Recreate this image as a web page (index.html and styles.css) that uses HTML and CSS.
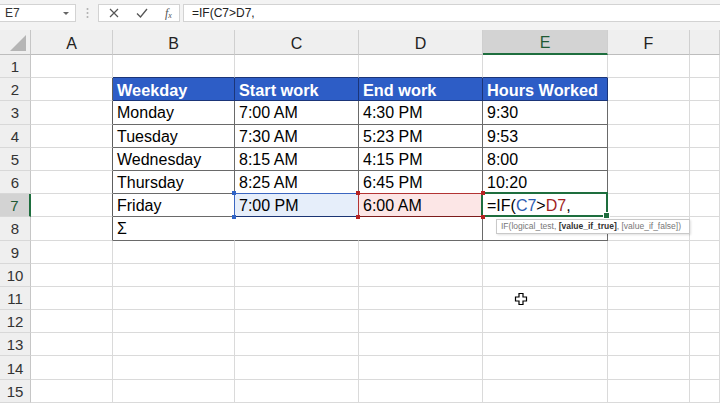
FILE: index.html
```html
<!DOCTYPE html>
<html>
<head>
<meta charset="utf-8">
<link rel="stylesheet" href="styles.css">
</head>
<body>
<div class="app">
  <div class="fbar">
    <div class="namebox"><span>E7</span><span class="dd"></span></div>
    <div class="sep"><svg width="3" height="12" viewBox="0 0 3 12"><circle cx="1.5" cy="2" r="1" fill="#b0b0b0"/><circle cx="1.5" cy="6" r="1" fill="#b0b0b0"/><circle cx="1.5" cy="10" r="1" fill="#b0b0b0"/></svg></div>
    <div class="btns">
      <svg width="10" height="10" viewBox="0 0 10 10"><path d="M1 1L9 9M9 1L1 9" stroke="#555" stroke-width="1.2" fill="none"/></svg>
      <svg width="12" height="10" viewBox="0 0 12 10"><path d="M1 5.5L4.5 9L11 1" stroke="#555" stroke-width="1.3" fill="none"/></svg>
      <span class="fx">f<sub>x</sub></span>
    </div>
    <div class="formula">=IF(C7&gt;D7,</div>
  </div>

  <div class="sheet">
    <!-- column headers -->
    <div class="corner"><span class="tri"></span></div>
    <div class="ch">A</div><div class="ch">B</div><div class="ch">C</div><div class="ch">D</div><div class="ch ch-sel">E</div><div class="ch">F</div><div class="ch"></div>

    <!-- row 1 -->
    <div class="rh">1</div><div class="c"></div><div class="c tb"></div><div class="c tb"></div><div class="c tb"></div><div class="c tb"></div><div class="c"></div><div class="c"></div>

    <!-- row 2 -->
    <div class="rh">2</div><div class="c lb"></div><div class="c th">Weekday</div><div class="c th">Start work</div><div class="c th">End work</div><div class="c th">Hours Worked</div><div class="c"></div><div class="c"></div>

    <!-- row 3 -->
    <div class="rh">3</div><div class="c lb"></div><div class="c td">Monday</div><div class="c td">7:00 AM</div><div class="c td">4:30 PM</div><div class="c td">9:30</div><div class="c"></div><div class="c"></div>

    <!-- row 4 -->
    <div class="rh">4</div><div class="c lb"></div><div class="c td">Tuesday</div><div class="c td">7:30 AM</div><div class="c td">5:23 PM</div><div class="c td">9:53</div><div class="c"></div><div class="c"></div>

    <!-- row 5 -->
    <div class="rh">5</div><div class="c lb"></div><div class="c td">Wednesday</div><div class="c td">8:15 AM</div><div class="c td">4:15 PM</div><div class="c td">8:00</div><div class="c"></div><div class="c"></div>

    <!-- row 6 -->
    <div class="rh">6</div><div class="c lb"></div><div class="c td">Thursday</div><div class="c td">8:25 AM</div><div class="c td">6:45 PM</div><div class="c td">10:20</div><div class="c"></div><div class="c"></div>

    <!-- row 7 -->
    <div class="rh rh-sel">7</div><div class="c lb"></div><div class="c td">Friday</div>
    <div class="c td ref-c">7:00 PM<span class="h h-tl"></span><span class="h h-bl"></span></div>
    <div class="c td ref-d">6:00 AM<span class="h h-tl"></span><span class="h h-bl"></span><span class="h h-tr"></span><span class="h h-br"></span></div>
    <div class="c td active">=IF(<span class="blue">C7</span>&gt;<span class="red">D7</span>,<span class="fill"></span></div>
    <div class="c"></div><div class="c"></div>

    <!-- row 8 -->
    <div class="rh">8</div><div class="c lb"></div><div class="c td nr">Σ</div><div class="c td nr"></div><div class="c td"></div><div class="c td"></div><div class="c"></div><div class="c"></div>

    <div class="rh">9</div><div class="c"></div><div class="c"></div><div class="c"></div><div class="c"></div><div class="c"></div><div class="c"></div><div class="c"></div>
    <div class="rh">10</div><div class="c"></div><div class="c"></div><div class="c"></div><div class="c"></div><div class="c"></div><div class="c"></div><div class="c"></div>
    <div class="rh">11</div><div class="c"></div><div class="c"></div><div class="c"></div><div class="c"></div><div class="c"></div><div class="c"></div><div class="c"></div>
    <div class="rh">12</div><div class="c"></div><div class="c"></div><div class="c"></div><div class="c"></div><div class="c"></div><div class="c"></div><div class="c"></div>
    <div class="rh">13</div><div class="c"></div><div class="c"></div><div class="c"></div><div class="c"></div><div class="c"></div><div class="c"></div><div class="c"></div>
    <div class="rh">14</div><div class="c"></div><div class="c"></div><div class="c"></div><div class="c"></div><div class="c"></div><div class="c"></div><div class="c"></div>
    <div class="rh">15</div><div class="c"></div><div class="c"></div><div class="c"></div><div class="c"></div><div class="c"></div><div class="c"></div><div class="c"></div>
  </div>

  <div class="tooltip">IF(logical_test, <b>[value_if_true]</b>, [value_if_false])</div>

  <svg class="cursor" width="14" height="14" viewBox="0 0 14 14"><path d="M5 1.5H9V5H12.5V9H9V12.5H5V9H1.5V5H5Z" fill="#fff" stroke="#000" stroke-width="1.2"/></svg>
</div>
</body>
</html>
```

FILE: styles.css
```css
html, body {
  margin: 0;
  padding: 0;
  background: #ffffff;
}

.app {
  position: relative;
  width: 720px;
  height: 404px;
  overflow: hidden;
  font-family: "Liberation Sans", Arial, sans-serif;
  color: #000;
}

/* formula bar */
.fbar {
  display: flex;
  align-items: flex-start;
  height: 30px;
  padding-top: 4px;
  box-sizing: border-box;
  background: #f3f3f3;
}

.namebox {
  width: 76px;
  height: 18px;
  box-sizing: border-box;
  background: #fff;
  border: 1px solid #d3d3d3;
  border-left: none;
  display: flex;
  align-items: center;
  justify-content: space-between;
  padding: 0 6px 0 5px;
  font-size: 12px;
  color: #333;
}

.dd {
  width: 0;
  height: 0;
  border-left: 3px solid transparent;
  border-right: 3px solid transparent;
  border-top: 3px solid #666;
}

.sep {
  width: 22px;
  height: 18px;
  display: flex;
  align-items: center;
  justify-content: center;
}

.btns {
  width: 82px;
  height: 18px;
  box-sizing: border-box;
  background: #fff;
  border: 1px solid #d3d3d3;
  display: flex;
  align-items: center;
  gap: 17px;
  padding-left: 10px;
}

.fx {
  font-family: "Liberation Serif", "Times New Roman", serif;
  font-style: italic;
  font-size: 12px;
  color: #555;
  line-height: 1;
}

.fx sub {
  font-size: 8px;
  vertical-align: -1px;
}

.formula {
  flex: 1;
  height: 18px;
  margin-left: 3px;
  box-sizing: border-box;
  background: #fff;
  border: 1px solid #d3d3d3;
  border-right: none;
  padding-left: 8px;
  font-size: 12px;
  line-height: 16px;
  color: #222;
}

/* sheet */
.sheet {
  display: grid;
  grid-template-columns: 31px 82px 122px 124px 124px 125px 82px 30px;
  grid-template-rows: 25px repeat(15, 23.2px);
}

.corner {
  position: relative;
  background: #efefef;
  border-right: 1px solid #c6c6c6;
  border-bottom: 1px solid #bdbdbd;
  box-sizing: border-box;
}

.tri {
  position: absolute;
  right: 4px;
  bottom: 3px;
  width: 0;
  height: 0;
  border-left: 16px solid transparent;
  border-bottom: 16px solid #b5b5b5;
}

.ch {
  background: #efefef;
  border-right: 1px solid #cfcfcf;
  border-bottom: 1px solid #bdbdbd;
  box-sizing: border-box;
  display: flex;
  align-items: center;
  justify-content: center;
  padding-top: 3px;
  font-size: 16px;
  color: #222;
}

.ch-sel {
  background: #d3d3d3;
  border-bottom: 2px solid #1e6e3e;
  color: #1f5a34;
}

.rh {
  background: #efefef;
  border-right: 1px solid #c6c6c6;
  border-bottom: 1px solid #d8d8d8;
  box-sizing: border-box;
  display: flex;
  align-items: center;
  justify-content: center;
  padding-top: 1px;
  font-size: 15px;
  color: #333;
}

.rh-sel {
  background: #d3d3d3;
  border-right: 2px solid #1e6e3e;
  color: #1f5a34;
}

.c {
  position: relative;
  border-right: 1px solid #dadada;
  border-bottom: 1px solid #dadada;
  box-sizing: border-box;
  display: flex;
  align-items: center;
  padding-left: 4px;
  padding-top: 2px;
  font-size: 16px;
  white-space: nowrap;
}

.tb {
  border-bottom-color: #1b3578;
}

.lb {
  border-right-color: #5e5e5e;
}

.th {
  background: #2d5dc6;
  color: #fff;
  font-weight: bold;
  font-size: 16.3px;
  border-right-color: #1b3578;
  border-bottom-color: #1b3578;
}

.td {
  border-right-color: #6a6a6a;
  border-bottom-color: #6a6a6a;
}

.nr {
  border-right-color: transparent;
}

/* reference highlights */
.ref-c {
  background: #e6eefa;
}

.ref-c::after {
  content: "";
  position: absolute;
  left: -1px;
  top: -1px;
  right: -1px;
  bottom: -1px;
  border: 1px solid #3b66c0;
  border-bottom-color: #1b3473;
}

.ref-d {
  background: #fce6e6;
}

.ref-d::after {
  content: "";
  position: absolute;
  left: -1px;
  top: -1px;
  right: -1px;
  bottom: -1px;
  border: 1px solid #b33434;
  border-bottom-color: #7c1c1c;
}

.h {
  position: absolute;
  width: 4px;
  height: 4px;
  z-index: 2;
}

.ref-c .h { background: #2f63c6; }
.ref-d .h { background: #b52222; }

.h-tl { left: -3px; top: -3px; }
.h-bl { left: -3px; bottom: -3px; }
.h-tr { right: -3px; top: -3px; }
.h-br { right: -3px; bottom: -3px; }

.active::after {
  content: "";
  position: absolute;
  left: -2px;
  top: -2px;
  right: -1px;
  bottom: -1px;
  border: 2px solid #1e6e3e;
  z-index: 1;
}

.fill {
  position: absolute;
  right: -3px;
  bottom: -3px;
  width: 5px;
  height: 5px;
  background: #1e6e3e;
  border: 1px solid #fff;
  z-index: 3;
}

.blue { color: #2c5bb0; }
.red { color: #a11f24; }

.tooltip {
  position: absolute;
  left: 496px;
  top: 219px;
  width: 194px;
  height: 15px;
  box-sizing: border-box;
  background: #fff;
  border: 1px solid #c9c9c9;
  box-shadow: 1px 1px 2px rgba(0,0,0,0.12);
  font-size: 8.5px;
  line-height: 13px;
  padding-left: 4px;
  color: #777;
  white-space: nowrap;
}

.tooltip b {
  color: #333;
}

.cursor {
  position: absolute;
  left: 514px;
  top: 292px;
}
```
